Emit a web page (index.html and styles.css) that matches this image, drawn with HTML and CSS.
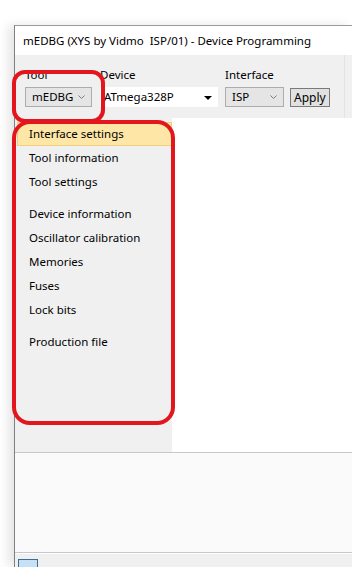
FILE: index.html
```html
<!DOCTYPE html>
<html lang="en">
<head>
    <meta charset="UTF-8">
    <title>Device Programming</title>
    <link rel="stylesheet" href="styles.css">
</head>
<body>
    <div class="window">
        <div class="titlebar">mEDBG (XYS by Vidmo&nbsp; ISP/01) - Device Programming</div>

        <div class="toolbar">
            <div class="field tool-field">
                <label>Tool</label>
                <div class="combo gray w-tool">mEDBG
                    <svg class="chev" width="7" height="4" viewBox="0 0 7 4"><path d="M0.5 0.5 L3.5 3.5 L6.5 0.5" fill="none" stroke="#7a7a7a" stroke-width="1"/></svg>
                </div>
            </div>
            <div class="field">
                <label>Device</label>
                <div class="combo white w-device">ATmega328P <span class="tri"></span></div>
            </div>
            <div class="field">
                <label>Interface</label>
                <div class="row">
                    <div class="combo gray w-iface">ISP
                        <svg class="chev" width="7" height="4" viewBox="0 0 7 4"><path d="M0.5 0.5 L3.5 3.5 L6.5 0.5" fill="none" stroke="#7a7a7a" stroke-width="1"/></svg>
                    </div>
                    <button class="apply">Apply</button>
                </div>
            </div>
            <div class="toolbar-end"></div>
        </div>

        <div class="main">
            <div class="nav">
                <div class="nav-item selected">Interface settings</div>
                <div class="nav-item">Tool information</div>
                <div class="nav-item">Tool settings</div>
                <div class="nav-gap"></div>
                <div class="nav-item">Device information</div>
                <div class="nav-item">Oscillator calibration</div>
                <div class="nav-item">Memories</div>
                <div class="nav-item">Fuses</div>
                <div class="nav-item">Lock bits</div>
                <div class="nav-gap"></div>
                <div class="nav-item">Production file</div>
            </div>
            <div class="content"></div>
        </div>

        <div class="log"></div>
        <div class="statusbar"><span class="status-box"></span></div>
    </div>

    <!-- annotation marks drawn over the screenshot -->
    <div class="mark mark-tool"></div>
    <div class="mark mark-nav"></div>
</body>
</html>
```

FILE: styles.css
```css
body { margin: 0; background: #fff; font-family: "Noto Sans", "Open Sans", sans-serif; font-size: 11.5px; color: #000; overflow: hidden; height: 567px; position: relative; }
.window { margin: 25px 0 0 14px; border-top: 1px solid #9a9a9a; border-left: 1px solid #808080; box-shadow: -6px 0 10px rgba(0,0,0,0.10); height: 542px; box-sizing: border-box; background: #f0f0f0; display: flex; flex-direction: column; overflow: hidden; }
.titlebar { height: 29px; line-height: 30px; background: #fff; padding-left: 8px; white-space: nowrap; flex: none; }
.toolbar { display: flex; height: 63px; flex: none; background: #f0f0f0; padding-left: 10px; box-sizing: border-box; }
.field { display: flex; flex-direction: column; margin-right: 7px; }
.field label { height: 20px; line-height: 20px; margin-top: 10px; margin-bottom: 2px; }
.tool-field { margin-right: 8px; }
.row { display: flex; gap: 6px; }
.combo { height: 20px; box-sizing: border-box; line-height: 18px; padding-left: 5px; position: relative; }
.combo.gray { background: #e5e5e5; border: 1px solid #adadad; }
.combo.white { background: #fff; border: 1px solid #fff; padding-left: 3px; }
.w-tool { width: 67px; padding-left: 6px; }
.w-device { width: 118px; }
.w-iface { width: 59px; padding-left: 6px; }
.chev { position: absolute; right: 6px; top: 7px; }
.tri { position: absolute; right: 5px; top: 8px; border-left: 4px solid transparent; border-right: 4px solid transparent; border-top: 4px solid #000; }
.apply { height: 19px; margin-top: 1px; padding: 0 3px; font: inherit; font-size: 12px; background: #e1e1e1; border: 1px solid #7a7a7a; line-height: 15px; }
.toolbar-end { margin-left: auto; width: 7px; border-left: 1px solid #e3e3e3; background: #f0f0f0; }
.main { display: flex; height: 334px; flex: none; background: #fff; }
.nav { width: 157px; background: #f0f0f0; padding-top: 4px; box-sizing: border-box; }
.nav-item { height: 24px; line-height: 24px; padding-left: 12px; margin-left: 2px; }
.nav-item.selected { background: #fde6a6; border: 1px solid #f1cf7e; line-height: 22px; padding-left: 11px; box-sizing: border-box; }
.nav-gap { height: 8px; }
.content { flex: 1; background: #fff; }
.log { height: 99px; flex: none; background: #fafafa; border-top: 1px solid #c4c6d0; border-bottom: 1px solid #c4c6d0; }
.statusbar { flex: 1; background: #f0f0f0; padding: 5px 0 0 3px; border-top: 1px solid #fff; }
.status-box { display: block; width: 18px; height: 14px; background: #c7e0f4; border: 1px solid #3b6d96; }
.mark { position: absolute; border: 4px solid #e3161d; box-sizing: border-box; }
.mark-tool { left: 12px; top: 70px; width: 93px; height: 53px; border-radius: 13px; }
.mark-nav { left: 12px; top: 120px; width: 163px; height: 305px; border-radius: 18px; }
```
